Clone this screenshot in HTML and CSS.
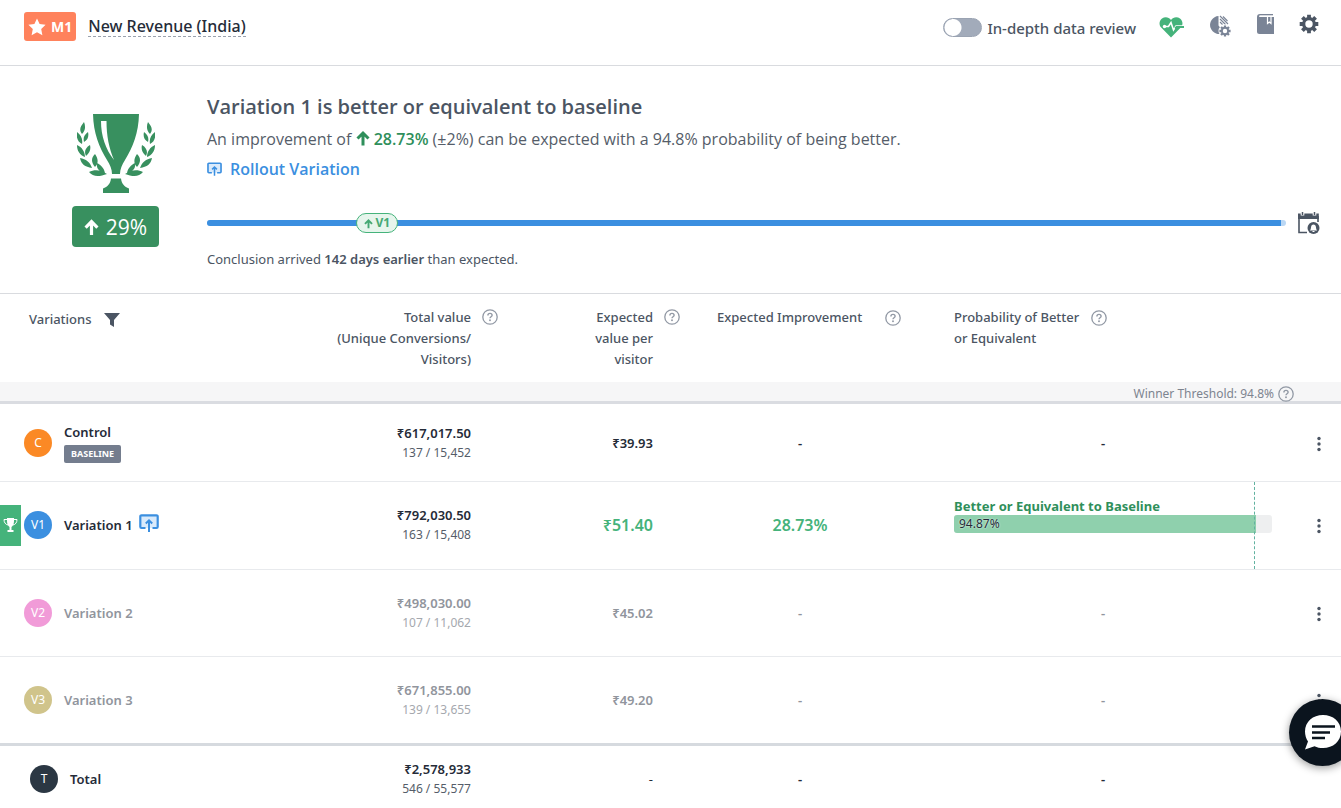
FILE: index.html
```html
<!DOCTYPE html>
<html lang="en">
<head>
<meta charset="utf-8">
<meta name="viewport" content="width=device-width, initial-scale=1">
<title>New Revenue (India)</title>
<link rel="stylesheet" href="styles.css">
</head>
<body>
<svg class="defs" aria-hidden="true">
  <symbol id="arrow-up" viewBox="0 0 14 16"><path d="M7 15.500V3M1.500 8.500 7 3l5.500 5.500" fill="none" stroke="currentColor" stroke-width="3"/></symbol>
  <symbol id="help" viewBox="0 0 16 16"><circle cx="8" cy="8" r="7.200" fill="none" stroke="currentColor" stroke-width="1.300"/><path d="M5.900 6.400c0-1.300.9-2 2.100-2s2.100.8 2.100 1.800c0 1.500-2.100 1.500-2.100 3.100" fill="none" stroke="currentColor" stroke-width="1.400"/><circle cx="8" cy="11.300" r=".95" fill="currentColor"/></symbol>
  <symbol id="rollout" viewBox="0 0 20 18"><path d="M6.500 14H2.500A1.200 1.200 0 0 1 1.300 12.800V2.500a1.200 1.200 0 0 1 1.200-1.200h15a1.200 1.200 0 0 1 1.200 1.200v10.300a1.200 1.200 0 0 1-1.200 1.200h-4" fill="#d9eafb" stroke="currentColor" stroke-width="2.200"/><path d="M10 18V7M6.800 9.500 10 6.300l3.200 3.200" fill="none" stroke="currentColor" stroke-width="2"/></symbol>
  <symbol id="dots" viewBox="0 0 4 16"><circle cx="2" cy="2.500" r="1.700"/><circle cx="2" cy="8" r="1.700"/><circle cx="2" cy="13.500" r="1.700"/></symbol>
  <symbol id="gear" viewBox="-10 -10 20 20">
    <circle r="5.300" fill="none" stroke="currentColor" stroke-width="3.200"/>
    <path d="M0-9.300V-6M0 9.300V6M-9.300 0H-6M9.300 0H6M-6.600-6.600-4.300-4.300M6.600 6.600 4.300 4.300M-6.600 6.600-4.300 4.300M6.600-6.600 4.300-4.300" stroke="currentColor" stroke-width="3.800"/>
  </symbol>
  <symbol id="leaf-branch" viewBox="0 0 30 60">
    <path d="M7 0C3 5 2 8 5 12c3-3 4-7 2-12zM0 10c-1 6 1 10 5 12 1-5-1-9-5-12zM11 10c-4 3-5 6-4 10 4-2 5-6 4-10zM0 23c0 6 3 10 8 12 0-5-3-10-8-12zM13 23c-5 3-6 7-4 11 4-3 5-7 4-11zM3 36c1 6 5 9 12 10-2-6-6-9-12-10zM18 32c-4 4-4 8 0 13 4-4 3-9 0-13zM12 50c4 5 10 5 18 2-6-4-12-5-18-2zM20 41c-1 5 2 9 8 10-1-5-4-8-8-10z"/>
  </symbol>
</svg>

<header class="topbar">
  <span class="metric-tag">
    <svg class="star" viewBox="0 0 18 18"><path d="m9 .5 2.600 5.600 6 .7-4.400 4.200 1.200 6.200L9 14.200l-5.400 3 1.200-6.200L.4 6.800l6-.7z" fill="#fff"/></svg>
    M1
  </span>
  <h1 class="metric-name">New Revenue (India)</h1>
  <div class="tools">
    <label class="review"><input class="switch" type="checkbox" role="switch">In-depth data review</label>
    <button class="tool health" aria-label="Health">
      <svg width="26" height="22" viewBox="0 0 26 22"><path d="M12 21.500 2.200 11.600C-.4 8.800.2 4.500 3 2.500c3-2.200 6.700-1.600 9 1.400 2.300-3 6-3.600 9-1.400 2.800 2 3.400 6.300.8 9.100z" fill="#45b37b"/><path d="M5 10.500h4.500L12 6.500l2.500 7.500 2.500-4h7" fill="none" stroke="#fff" stroke-width="1.600"/><path d="M16 12.500l1.500-1.500H25" fill="none" stroke="#45b37b" stroke-width="1.800"/><circle cx="5.500" cy="10.500" r="1.700" fill="#fff"/></svg>
    </button>
    <button class="tool segment" aria-label="Segment settings">
      <svg width="22" height="23" viewBox="0 0 22 23"><path d="M9.500 1A9 9 0 1 0 15 17.500L9.500 10.500z" fill="#7a8496"/><path d="M11 7l2.500 2.500M11 4l5.500 5.500M11 1l8 8M14 1.500 18.500 6" stroke="#7a8496" stroke-width="1.100"/><circle cx="16" cy="16" r="6.500" fill="#fff"/><use href="#gear" class="mini-gear" x="10" y="10" width="12" height="12"/></svg>
    </button>
    <button class="tool book" aria-label="Notes">
      <svg width="17" height="20" viewBox="0 0 17 20"><path d="M3 0h13v1.500H3V3h14v17H2.500A2.500 2.500 0 0 1 0 17.500V3a3 3 0 0 1 3-3z" fill="#7a8496"/><path d="M2 2.200h15" stroke="#fff" stroke-width="1.200"/><path d="M10.500 3v6.500l1.800-1.500 1.700 1.500V3" stroke="#fff" stroke-width="1.200" fill="none"/></svg>
    </button>
    <button class="tool settings" aria-label="Settings"><svg width="20" height="20"><use href="#gear"/></svg></button>
  </div>
</header>

<section class="summary">
  <div class="result">
    <svg class="trophy" viewBox="0 0 78 79" fill="#38905f">
      <path d="M16 0h46c-.5 19-6 33-14 46-3 5-5 9-5 14h-8c0-5-2-9-5-14C22 33 16.500 19 16 0z"/>
      <path d="M24 7h5.500c0 15 2.500 27 7.500 39C28.500 35 24 22 24 7z" fill="#fff"/>
      <path d="M34 64.500h10c.5 5 3.500 8.500 8 10V79H26v-4.500c4.500-1.500 7.500-5 8-10z"/>
      <use href="#leaf-branch" x="0" y="8" width="30" height="60"/>
      <use href="#leaf-branch" x="0" y="8" width="30" height="60" transform="matrix(-1 0 0 1 78 0)"/>
    </svg>
    <div class="uplift"><svg width="15" height="18"><use href="#arrow-up"/></svg>29%</div>
  </div>
  <div class="verdict">
    <h2 class="headline">Variation 1 is better or equivalent to baseline</h2>
    <p class="detail">An improvement of <svg class="inline-arrow" width="14" height="16"><use href="#arrow-up"/></svg> <b class="gain">28.73%</b> (±2%) can be expected with a 94.8% probability of being better.</p>
    <a class="rollout" href="#"><svg width="15" height="14"><use href="#rollout"/></svg>Rollout Variation</a>
    <div class="timeline">
      <div class="track">
        <div class="track-fill"></div>
        <span class="pin"><svg width="9" height="11"><use href="#arrow-up"/></svg>V1</span>
      </div>
      <button class="tool" aria-label="Reminder">
        <svg width="24" height="24" viewBox="0 0 24 24"><path d="M2 5v16.500h8M21 5v6" fill="none" stroke="#4b5563" stroke-width="1.600"/><path d="M1 2.500h20.800V8H1z" fill="#4b5563"/><path d="M5.500 0v4.500M17.500 0v4.500" stroke="#fff" stroke-width="3.600"/><path d="M5.500 1v3M17.500 1v3" stroke="#4b5563" stroke-width="1.500"/><circle cx="16.500" cy="17" r="6" fill="#4b5563"/><path d="M12.800 19.500c1.200-.8 1-2.500 1.300-3.800.5-3 4.300-3 4.800 0 .3 1.300.1 3 1.300 3.800z" fill="#fff"/><path d="M15.500 20.500h2" stroke="#fff"/></svg>
      </button>
    </div>
    <p class="conclusion">Conclusion arrived <b>142 days earlier</b> than expected.</p>
  </div>
</section>

<table class="report">
  <colgroup><col><col class="c-total"><col class="c-value"><col class="c-improve"><col class="c-prob"><col class="c-menu"></colgroup>
  <thead>
    <tr class="heads">
      <th><div class="head first">Variations<svg width="16" height="14" viewBox="0 0 16 14"><path d="M0 0h16L10 7v7l-4-2.500V7z" fill="#4b5563"/></svg></div></th>
      <th><div class="head right">Total value<br>(Unique Conversions/<br>Visitors)<svg class="help"><use href="#help"/></svg></div></th>
      <th><div class="head right">Expected<br>value per<br>visitor<svg class="help"><use href="#help"/></svg></div></th>
      <th><div class="head improve">Expected Improvement<svg class="help"><use href="#help"/></svg></div></th>
      <th><div class="head prob"><span>Probability of Better<br>or Equivalent</span><svg class="help"><use href="#help"/></svg></div></th>
      <th></th>
    </tr>
    <tr class="threshold"><td colspan="6"><div class="threshold-line">Winner Threshold: 94.8%<svg class="help"><use href="#help"/></svg></div></td></tr>
  </thead>
  <tbody>
    <tr class="control">
      <td><div class="name"><span class="dot orange">C</span><div class="stack">Control<span class="baseline">BASELINE</span></div></div></td>
      <td class="num">₹617,017.50<small>137 / 15,452</small></td>
      <td class="num">₹39.93</td><td class="mid">-</td><td class="mid">-</td>
      <td class="menu"><button class="more" aria-label="Control actions"><svg><use href="#dots"/></svg></button></td>
    </tr>
    <tr class="winner">
      <td class="flagged"><span class="flag"><svg width="15" height="14" viewBox="0 0 15 14"><path d="M4 0h7v3c0 3-1 5-2.500 6v3h2V14h-6v-2h2V9C5 8 4 6 4 3z" fill="#fff"/><path d="M4 1.500H1c0 3 1.500 5 4 5.500M11 1.500h3c0 3-1.500 5-4 5.500" fill="none" stroke="#fff"/></svg></span>
        <div class="name"><span class="dot blue">V1</span>Variation 1<svg class="rollout-icon"><use href="#rollout"/></svg></div></td>
      <td class="num">₹792,030.50<small>163 / 15,408</small></td>
      <td class="num lift">₹51.40</td><td class="mid lift">28.73%</td>
      <td class="chance"><div class="chance-label">Better or Equivalent to Baseline</div><div class="bar"><div class="bar-fill" style="width:94.87%">94.87%</div></div><span class="marker"></span></td>
      <td class="menu"><button class="more" aria-label="Variation 1 actions"><svg><use href="#dots"/></svg></button></td>
    </tr>
    <tr class="faded second">
      <td><div class="name"><span class="dot pink">V2</span>Variation 2</div></td>
      <td class="num">₹498,030.00<small>107 / 11,062</small></td>
      <td class="num">₹45.02</td><td class="mid">-</td><td class="mid">-</td>
      <td class="menu"><button class="more" aria-label="Variation 2 actions"><svg><use href="#dots"/></svg></button></td>
    </tr>
    <tr class="faded">
      <td><div class="name"><span class="dot khaki">V3</span>Variation 3</div></td>
      <td class="num">₹671,855.00<small>139 / 13,655</small></td>
      <td class="num">₹49.20</td><td class="mid">-</td><td class="mid">-</td>
      <td class="menu"><button class="more" aria-label="Variation 3 actions"><svg><use href="#dots"/></svg></button></td>
    </tr>
  </tbody>
  <tfoot>
    <tr class="total">
      <td><div class="name"><span class="dot dark">T</span>Total</div></td>
      <td class="num">₹2,578,933<small>546 / 55,577</small></td>
      <td class="num">-</td><td class="mid">-</td><td class="mid">-</td><td></td>
    </tr>
  </tfoot>
</table>

<button class="chat" aria-label="Open chat">
  <svg width="38" height="36" viewBox="0 0 38 36"><path d="M19 0c10 0 18 6.500 18 16.500S29 33 19 33c-3 0-6-.5-8.500-1.800L1 34.500l3-8C2 23.500 1 20 1 16.500 1 6.500 9 0 19 0z" fill="#fff"/><path d="M8 11.500h23M8 17.500h18M8 23h13" stroke="#0b141e" stroke-width="2.400"/></svg>
</button>
</body>
</html>
```
FILE: styles.css
```css
* { box-sizing: border-box; }
body { margin: 0; background: #fff; color: #4b5563; font: 14px/20px "Open Sans", "Noto Sans", sans-serif; overflow-x: hidden; }
h1, h2, p { margin: 0; }
button { padding: 0; border: 0; background: none; cursor: pointer; }
svg { flex: none; }
.defs { position: absolute; width: 0; height: 0; }

.topbar { display: flex; align-items: center; height: 66px; padding: 0 22px 12px 24px; border-bottom: 1px solid #d9dbdf; }
.metric-tag { display: flex; align-items: center; gap: 5px; height: 29px; padding: 0 4px; border-radius: 3px; background: #ff825c; color: #fff; font-size: 14px; font-weight: 700; }
.star { width: 18px; height: 18px; }
.metric-name { margin-left: 12px; border-bottom: 1px dashed #9aa1ad; color: #252b38; font: 500 16px/20px "Noto Sans", sans-serif; }
.tools { display: flex; align-items: center; margin-left: auto; }
.review { display: flex; align-items: center; gap: 5px; margin-right: 23px; padding-top: 2px; font: 500 15px/20px "Noto Sans", sans-serif; }
.switch { appearance: none; width: 39px; height: 19px; margin: 0; border: 1px solid #9aa3b2; border-radius: 10px; background: radial-gradient(circle at 9px 50%, #fff 8px, #a2abba 9px); }
.tool { display: flex; color: #4b5563; }
.mini-gear { color: #7a8496; }
.segment { margin-left: 24px; }
.book { margin-left: 26px; margin-bottom: 6px; }
.settings { margin-left: 25px; margin-bottom: 6px; }

.summary { display: flex; gap: 48px; padding: 25px 20px 22px 72px; border-bottom: 1px solid #d9dbdf; }
.result { display: flex; flex-direction: column; align-items: center; gap: 13px; width: 87px; padding-top: 23px; }
.trophy { width: 78px; height: 79px; }
.uplift { display: flex; align-items: center; justify-content: center; gap: 7px; width: 100%; height: 41px; border-radius: 4px; background: #38905f; color: #fff; font-size: 21px; }
.verdict { flex: 1; }
.headline { padding-top: 1px; font-size: 20px; line-height: 29px; font-weight: 600; }
.detail { font-size: 16px; line-height: 36px; color: #555d69; }
.inline-arrow, .gain { color: #2f8f5b; }
.inline-arrow { vertical-align: -1px; }
.gain { font-weight: 600; }
.rollout { display: inline-flex; align-items: center; gap: 8px; line-height: 24px; color: #3b8fe0; font-size: 16px; font-weight: 600; text-decoration: none; }
.timeline { display: flex; align-items: center; gap: 11px; margin-top: 30px; }
.track { position: relative; flex: 1; height: 6px; border-radius: 3px; background: #bad7f4; }
.track-fill { width: 99.5%; height: 100%; border-radius: 3px 0 0 3px; background: #3b8fe0; }
.pin { position: absolute; left: 13.8%; top: -7px; display: flex; align-items: center; justify-content: center; gap: 3px; width: 42px; height: 20px; border: 1px solid #45b37b; border-radius: 10px; background: #e6f5ec; color: #45a873; font-size: 12px; font-weight: 700; }
.conclusion { margin-top: 12px; font: 13px/24px "Noto Sans", sans-serif; }
.conclusion b { font-weight: 600; }

.report { width: 100%; table-layout: fixed; border-collapse: separate; border-spacing: 0; font-family: "Noto Sans", sans-serif; font-size: 13px; }
.c-total { width: 220px; }
.c-value { width: 182px; }
.c-improve { width: 216px; }
.c-prob { width: 390px; }
.c-menu { width: 43px; }
.report th, .report td { padding: 0; text-align: left; font-weight: 600; }
.report .heads th { height: 88px; padding-top: 13px; vertical-align: top; font-weight: 500; line-height: 21px; }
.head { position: relative; }
.first { display: flex; align-items: center; gap: 12px; padding: 2px 0 0 29px; }
.right { padding-right: 39px; text-align: right; }
.right .help { position: absolute; top: 2px; right: 12px; }
.improve { display: flex; align-items: center; justify-content: space-between; padding: 0 7px 0 25px; }
.prob { display: flex; gap: 12px; padding-left: 46px; }
.prob .help { margin-top: 3px; }
.help { width: 16px; height: 16px; color: #9299a5; }
.report .threshold td { height: 22px; border-bottom: 3px solid #dadce1; background: #f6f6f7; }
.threshold-line { display: flex; align-items: center; justify-content: flex-end; gap: 4px; height: 19px; padding: 4px 47px 0 0; color: #7d8490; font-size: 12px; font-weight: 400; }

tbody tr, tfoot tr { color: #252b38; }
.report tbody td { height: 88px; padding-bottom: 1px; border-bottom: 1px solid #e8eaed; }
.report .control td { height: 78px; padding-bottom: 0; }
.report .second td { height: 87px; }
.report tbody tr:last-child td { height: 89px; border-bottom: 3px solid #d6dadf; }
.name { display: flex; align-items: center; gap: 12px; padding-left: 24px; }
.dot { display: grid; place-items: center; width: 28px; height: 28px; border-radius: 50%; color: #fff; font-size: 12px; font-weight: 400; }
.orange { background: #fb8925; }
.blue { background: #3b8fe0; }
.pink { background: #f19bd8; }
.khaki { background: #d0c48b; }
.dark { background: #2b3743; }
.stack { display: flex; flex-direction: column; align-items: flex-start; gap: 3px; }
.baseline { padding: 0 7px; border-radius: 2px; background: #747d8e; color: #fff; font-size: 9px; line-height: 18px; font-weight: 700; }
.report tbody .num, .report .num { padding-right: 39px; text-align: right; }
.num small { display: block; color: #555d69; font-size: 12px; font-weight: 400; }
.report .mid { text-align: center; }
.report .menu { padding-left: 19px; }
.report .lift { color: #45b37b; font-size: 16px; }
.flagged { position: relative; }
.flag { position: absolute; left: 0; top: calc(50% - 21px); display: grid; place-items: center; width: 21px; height: 41px; background: #45b37b; }
.rollout-icon { width: 20px; height: 18px; margin: 0 0 4px -6px; color: #3b8fe0; }
.report .winner .chance { position: relative; padding: 0 26px 22px 46px; }
.chance-label { color: #2f8f5b; line-height: 18px; font-weight: 700; }
.bar { height: 18px; border-radius: 3px; background: #eeeff0; overflow: hidden; }
.bar-fill { height: 100%; padding-left: 5px; background: #8fd0ad; color: #252b38; font-size: 12px; line-height: 18px; font-weight: 400; text-shadow: 0 0 2px #fff; }
.marker { position: absolute; top: 0; bottom: 0; left: calc(46px + (100% - 72px) * 0.944); border-left: 1px dashed #62b2a0; }
.more { display: inline-flex; vertical-align: middle; }
.more svg { width: 4px; height: 16px; fill: #4b5563; }
.faded .name, .faded .num, .faded .mid { color: #91959d; }
.faded .dot { color: #fff; }
.faded small { color: #a5a8ae; }
.report .total td { height: 62px; padding-top: 4px; }
.total .name { padding-left: 30px; }
.report .total td:nth-child(3) { font-weight: 400; }

.chat { position: fixed; right: -15px; bottom: 42px; display: grid; place-items: center; width: 67px; height: 67px; border-radius: 50%; background: #0b141e; box-shadow: 0 2px 8px rgba(0, 0, 0, .4); }
```
